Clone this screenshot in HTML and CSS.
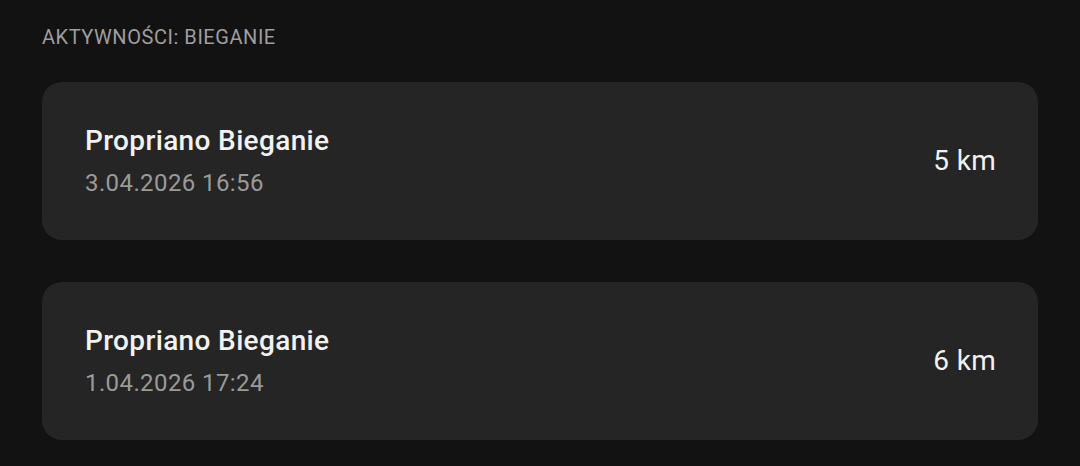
FILE: index.html
```html
<!DOCTYPE html>
<html lang="pl">
<head>
<meta charset="utf-8">
<title>Aktywności: Bieganie</title>
<link rel="stylesheet" href="styles.css">
</head>
<body>
<main class="page">
  <h2 class="section-title">Aktywności: Bieganie</h2>
  <ul class="list">
    <li class="card">
      <div class="info">
        <div class="name">Propriano Bieganie</div>
        <div class="date">3.04.2026 16:56</div>
      </div>
      <div class="distance">5 km</div>
    </li>
    <li class="card">
      <div class="info">
        <div class="name">Propriano Bieganie</div>
        <div class="date">1.04.2026 17:24</div>
      </div>
      <div class="distance">6 km</div>
    </li>
  </ul>
</main>
</body>
</html>
```
FILE: styles.css
```css
html, body {
  margin: 0;
  padding: 0;
  background: #121212;
}
body {
  font-family: Roboto, "Liberation Sans", sans-serif;
  color: #f2f2f2;
}
.page {
  padding: 25px 42px 0 42px;
}
.section-title {
  margin: 0;
  font-size: 20px;
  line-height: 24px;
  font-weight: 400;
  letter-spacing: 0.55px;
  text-transform: uppercase;
  color: #9e9e9e;
}
.list {
  list-style: none;
  margin: 33px 0 0 0;
  padding: 0;
  display: flex;
  flex-direction: column;
  gap: 42px;
}
.card {
  background: #252525;
  border-radius: 20px;
  padding: 42px 42px 42px 43px;
  display: flex;
  align-items: center;
  justify-content: space-between;
}
.info {
  display: flex;
  flex-direction: column;
  gap: 10px;
}
.name {
  font-size: 28px;
  line-height: 34px;
  font-weight: 500;
  letter-spacing: 0.35px;
  color: #f2f2f2;
}
.date {
  font-size: 24px;
  line-height: 30px;
  letter-spacing: 0.4px;
  color: #9a9a9a;
}
.distance {
  font-size: 28px;
  line-height: 34px;
  letter-spacing: 0.3px;
  color: #f2f2f2;
}
```
